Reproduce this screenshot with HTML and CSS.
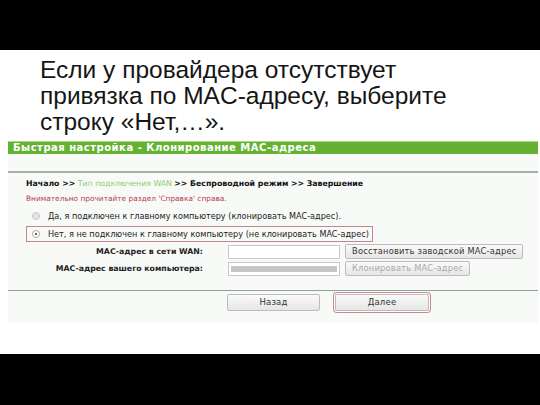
FILE: index.html
```html
<!DOCTYPE html>
<html>
<head>
<meta charset="utf-8">
<link rel="stylesheet" href="styles.css">
</head>
<body>
<div class="bar"></div>
<div class="slide">
  <div class="title">Если у провайдера отсутствует<br>привязка по MAC-адресу, выберите<br>строку «Нет,…».</div>
  <div class="router">
    <div class="head">Быстрая настройка - Клонирование MAC-адреса</div>
    <div class="panel">
      <div class="gap"></div>
      <div class="rule"></div>
      <div class="crumbs"><b>Начало &gt;&gt;</b> <span class="cur">Тип подключения WAN</span> <b>&gt;&gt; Беспроводной режим &gt;&gt; Завершение</b></div>
      <div class="warn">Внимательно прочитайте раздел 'Справка' справа.</div>
      <div class="opt"><span class="radio"></span>Да, я подключен к главному компьютеру (клонировать MAC-адрес).</div>
      <div class="opt sel"><span class="radio on"></span>Нет, я не подключен к главному компьютеру (не клонировать MAC-адрес)</div>
      <div class="field"><span class="lbl">MAC-адрес в сети WAN:</span><span class="inp"></span><span class="btn">Восстановить заводской MAC-адрес</span></div>
      <div class="field"><span class="lbl">MAC-адрес вашего компьютера:</span><span class="inp dis"><i></i></span><span class="btn off">Клонировать MAC-адрес</span></div>
      <div class="rule2"></div>
      <div class="nav"><span class="btn big">Назад</span><span class="btn big next">Далее</span></div>
    </div>
  </div>
</div>
<div class="bar bottom"></div>
</body>
</html>
```
FILE: styles.css
```css
html, body { margin: 0; padding: 0; background: #000; }
body { width: 540px; height: 405px; overflow: hidden; }
.bar { height: 50px; background: #000; }
.bar.bottom { height: 51px; }
.slide { height: 304px; background: #fff; overflow: hidden; }
.title {
  font-family: "Liberation Sans", Arial, sans-serif;
  font-size: 24.5px;
  line-height: 26px;
  color: #151515;
  padding: 7px 0 0 40px;
  height: 78px;
  white-space: nowrap;
}
.router {
  margin: 6px 2px 0 8px;
  font-family: "DejaVu Sans", Verdana, sans-serif;
  font-size: 7.8px;
}
.head {
  height: 12px;
  line-height: 12px;
  background: #65b232;
  border-top: 1px solid #a8d98a;
  color: #fff;
  font-weight: bold;
  font-size: 10px;
  letter-spacing: 0.5px;
  padding-left: 5px;
}
.panel { background: #f8faf8; height: 169px; }
.gap { height: 17px; }
.rule { height: 2px; background: #a7afaa; }
.crumbs { height: 20px; line-height: 22px; padding-left: 18px; color: #111; }
.crumbs .cur { color: #93c96a; }
.warn { height: 14px; line-height: 12px; padding-left: 18px; color: #b4404f; font-size: 7.4px; }
.opt { height: 18px; display: flex; align-items: center; padding-left: 24px; color: #222; font-size: 8.15px; }
.opt .radio {
  width: 6px; height: 6px; border-radius: 50%;
  border: 1px solid #c8c8c8; background: #e4e4e4;
  margin-right: 8px; position: relative; flex: none;
}
.opt .radio.on { background: #fff; border-color: #aaa; }
.opt .radio.on::after {
  content: ""; position: absolute; left: 2px; top: 2px;
  width: 2px; height: 2px; border-radius: 50%; background: #333;
}
.opt.sel {
  height: 14px;
  margin: 1px 0 1px 18px;
  padding-left: 5px;
  width: 340px;
  border: 1px solid #c38590;
  white-space: nowrap;
}
.field { height: 17px; display: flex; align-items: center; }
.lbl { width: 195px; text-align: right; font-weight: bold; color: #222; margin-right: 25px; }
.inp { width: 110px; height: 12px; background: #fff; border: 1px solid #c9c9c9; margin-right: 5px; position: relative; }
.inp.dis i { position: absolute; left: 2px; right: 2px; top: 3px; bottom: 3px; background: #c6c6c6; }
.btn {
  height: 13px; line-height: 13px; padding: 0 6px;
  background: linear-gradient(#fafafa, #e6e6e6);
  border: 1px solid #bcbcbc; border-radius: 2px;
  color: #333; font-size: 8.3px; letter-spacing: 0.2px;
}
.btn.off { color: #aaa; }
.rule2 { height: 1px; background: #8fa295; margin-top: 13px; }
.nav { display: flex; padding-left: 219px; padding-top: 3px; }
.btn.big { width: 91px; height: 15px; line-height: 15px; text-align: center; padding: 0; font-size: 8.5px; }
.btn.next { margin-left: 15px; width: 92px; box-shadow: 0 0 0 1px #fff, 0 0 0 2px #c98a93; }
```
